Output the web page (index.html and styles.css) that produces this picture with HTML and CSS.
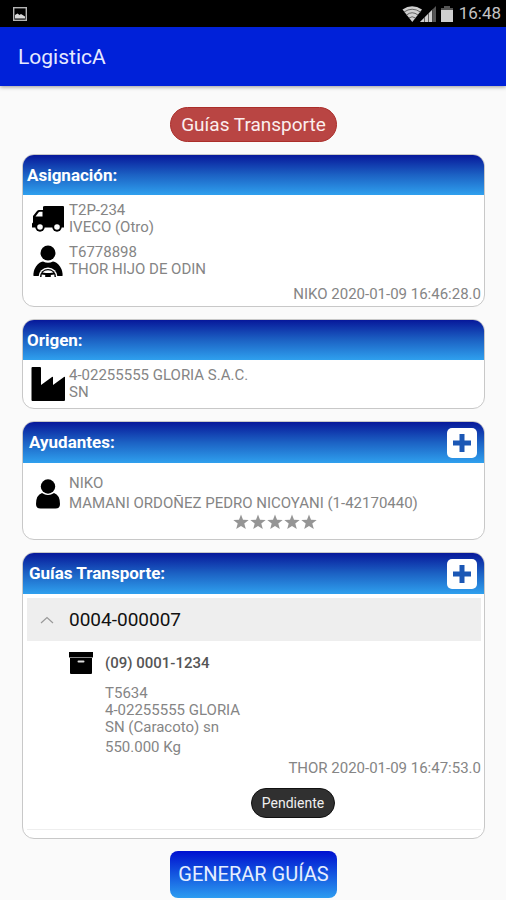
FILE: index.html
```html
<!DOCTYPE html>
<html lang="es">
<head>
  <meta charset="UTF-8">
  <meta name="viewport" content="width=device-width, initial-scale=1.0">
  <title>LogisticA</title>
  <link rel="stylesheet" href="styles.css">
</head>
<body>
  <div class="status-bar">
    <svg class="status-picture" width="14" height="14" viewBox="0 0 14 14">
      <rect x="0.7" y="0.7" width="12.6" height="12.6" fill="none" stroke="#b5b5b5" stroke-width="1.4"/>
      <path d="M2 11.5V8l2.500-1.500 2 1.500 1.500-1 4 2.500v2z" fill="#d8d8d8"/>
    </svg>
    <div class="status-right">
      <svg width="35" height="16" viewBox="0 0 35 16">
        <path d="M0.500 3.500Q10 -3 20 3.500L10.300 16z" fill="#cfcfcf"/>
        <path d="M2 6Q10 0.500 18.500 6M4.500 9Q10 4.500 16 9M7 12Q10 9.500 13.500 12" fill="none" stroke="#555" stroke-width="0.9"/>
        <path d="M18 16L34 0V16z" fill="#555"/>
        <path d="M18 16L30 4V16z" fill="#cfcfcf"/>
        <path d="M22.500 11v5M26.500 7v9M30.500 3v13" stroke="#444" stroke-width="0.8"/>
      </svg>
      <svg class="battery" width="12" height="16" viewBox="0 0 12 16">
        <path d="M3 0h6v2h3v3H0V2h3z" fill="#555"/>
        <path d="M0 4h12v12H0z" fill="#cfcfcf"/>
      </svg>
      <span class="clock">16:48</span>
    </div>
  </div>

  <header class="app-bar">
    <h1>LogisticA</h1>
  </header>

  <main class="content">
    <div class="pill">Guías Transporte</div>

    <section class="card">
      <h2 class="card-header">Asignación:</h2>
      <div class="card-body">
        <div class="row">
          <div class="row-icon">
            <svg width="32" height="26" viewBox="0 0 32 26">
              <path d="M13 0h18q1 0 1 1v20.500H0v-4l1-1v-6.500l4-5q1-1 2-1h4V1q0-1 2-1z"/>
              <path d="M3.500 10.500l3-4q.5-.7 1.300-.7H10.500V10.500z" fill="#fff"/>
              <circle cx="8" cy="21" r="4.700"/>
              <circle cx="25" cy="21" r="4.700"/>
              <circle cx="8" cy="21" r="2.800" fill="#fff"/>
              <circle cx="25" cy="21" r="2.800" fill="#fff"/>
            </svg>
          </div>
          <div class="row-text">
            <p>T2P-234</p>
            <p>IVECO (Otro)</p>
          </div>
        </div>
        <div class="row">
          <div class="row-icon">
            <svg width="30" height="32" viewBox="0 0 30 32">
              <circle cx="15" cy="8" r="7.500"/>
              <path d="M0.500 31Q0 26 3 21.500Q6 17 10 16.500Q15 19 20 16.500Q24 17 27 21.500Q30 26 29.500 31z"/>
              <path d="M5.500 32A9.500 9.500 0 0 1 24.500 32z" fill="#fff"/>
              <path d="M7 32A8 8 0 0 1 23 32z"/>
              <path d="M9.500 27.500Q11.500 25.300 15 25.300Q18.500 25.300 20.500 27.500L17 28H13zM8.700 29.500l3.500.5v2H8.500zM21.300 29.500l-3.500.5v2h3.700z" fill="#fff"/>
            </svg>
          </div>
          <div class="row-text">
            <p>T6778898</p>
            <p>THOR HIJO DE ODIN</p>
          </div>
        </div>
        <p class="stamp">NIKO 2020-01-09 16:46:28.0</p>
      </div>
    </section>

    <section class="card">
      <h2 class="card-header">Origen:</h2>
      <div class="card-body">
        <div class="row">
          <div class="row-icon">
            <svg width="34" height="34" viewBox="0 0 34 34">
              <path d="M1.500 0h7.500q1 0 1 1v17l11-8q1-.6 1 .6V18l11-8q1-.6 1 .6V33q0 1-1 1H1.500q-1 0-1-1V1q0-1 1-1z"/>
            </svg>
          </div>
          <div class="row-text">
            <p>4-02255555 GLORIA S.A.C.</p>
            <p>SN</p>
          </div>
        </div>
      </div>
    </section>

    <section class="card">
      <div class="card-header with-action">
        <h2>Ayudantes:</h2>
        <button class="add" type="button" aria-label="Agregar ayudante">
          <svg width="20" height="20" viewBox="0 0 20 20"><path d="M7.500 1h5v6.500H19v5h-6.500V19h-5v-6.500H1v-5h6.500z"/></svg>
        </button>
      </div>
      <div class="card-body helpers">
        <div class="row">
          <div class="row-icon">
            <svg width="24" height="30" viewBox="0 0 24 30">
              <path d="M6 14Q0 16 0 25q0 4.500 4.500 4.500h15Q24 29.500 24 25q0-9-6-11-6 4-12 0z"/>
              <circle cx="12" cy="7.500" r="8" fill="#fff"/>
              <circle cx="12" cy="7.500" r="7.200"/>
            </svg>
          </div>
          <div class="row-text spaced">
            <p>NIKO</p>
            <p>MAMANI ORDOÑEZ PEDRO NICOYANI (1-42170440)</p>
          </div>
        </div>
        <div class="stars" role="img" aria-label="0 de 5 estrellas">
          <svg viewBox="0 0 16 16"><path d="M8 .5l2 5.200 5.700.3-4.400 3.500 1.500 5.500L8 12l-4.800 3 1.500-5.500L.3 6 6 5.700z"/></svg>
          <svg viewBox="0 0 16 16"><path d="M8 .5l2 5.200 5.700.3-4.400 3.500 1.500 5.500L8 12l-4.800 3 1.500-5.500L.3 6 6 5.700z"/></svg>
          <svg viewBox="0 0 16 16"><path d="M8 .5l2 5.200 5.700.3-4.400 3.500 1.500 5.500L8 12l-4.800 3 1.500-5.500L.3 6 6 5.700z"/></svg>
          <svg viewBox="0 0 16 16"><path d="M8 .5l2 5.200 5.700.3-4.400 3.500 1.500 5.500L8 12l-4.800 3 1.500-5.500L.3 6 6 5.700z"/></svg>
          <svg viewBox="0 0 16 16"><path d="M8 .5l2 5.200 5.700.3-4.400 3.500 1.500 5.500L8 12l-4.800 3 1.500-5.500L.3 6 6 5.700z"/></svg>
        </div>
      </div>
    </section>

    <section class="card">
      <div class="card-header with-action">
        <h2>Guías Transporte:</h2>
        <button class="add" type="button" aria-label="Agregar guía">
          <svg width="20" height="20" viewBox="0 0 20 20"><path d="M7.500 1h5v6.500H19v5h-6.500V19h-5v-6.500H1v-5h6.500z"/></svg>
        </button>
      </div>
      <div class="guides">
        <button class="group" type="button" aria-expanded="true">
          <span class="row-icon">
            <svg width="14" height="8" viewBox="0 0 14 8"><path d="M1 7l6-5.500L13 7" fill="none" stroke="#9a9a9a" stroke-width="1.200"/></svg>
          </span>
          0004-000007
        </button>
        <div class="guide">
          <div class="guide-title">
            <svg width="24" height="22" viewBox="0 0 24 22">
              <path d="M0 0h24v5H0z"/>
              <path d="M1 6h22v15q0 1-1 1H2q-1 0-1-1z"/>
              <path d="M0 5h24v1H0z" fill="#888"/>
              <rect x="8.500" y="8.500" width="7" height="2" rx="1" fill="#ddd"/>
            </svg>
            <h3>(09) 0001-1234</h3>
          </div>
          <div class="guide-info">
            <p>T5634</p>
            <p>4-02255555 GLORIA</p>
            <p>SN (Caracoto) sn</p>
            <p class="weight">550.000 Kg</p>
          </div>
          <p class="stamp">THOR 2020-01-09 16:47:53.0</p>
          <div class="guide-state">
            <span class="state">Pendiente</span>
          </div>
        </div>
      </div>
    </section>

    <button class="generate" type="button">GENERAR GUÍAS</button>
  </main>
</body>
</html>
```
FILE: styles.css
```css
* {
  box-sizing: border-box;
}

body {
  margin: 0;
  font-family: Roboto, "Liberation Sans", sans-serif;
  font-size: 15px;
  line-height: 17px;
  color: #858585;
  background: #fafafa;
}

h1, h2, h3, p {
  margin: 0;
}

svg {
  display: block;
}

button {
  border: 0;
  padding: 0;
  font-family: inherit;
  cursor: pointer;
}

/* Android status bar */
.status-bar {
  display: flex;
  justify-content: space-between;
  align-items: center;
  height: 27px;
  padding: 0 5px 0 13px;
  background: #000;
}

.status-right {
  display: flex;
  align-items: center;
}

.battery {
  margin: 0 6px 0 4px;
}

.clock {
  font-size: 17px;
  color: #c4c4c4;
}

.app-bar {
  display: flex;
  align-items: center;
  height: 59px;
  padding: 0 18px;
  background: #0021d9;
  box-shadow: 0 1px 4px rgba(0, 0, 0, 0.4);
}

.app-bar h1 {
  font-size: 21px;
  line-height: 24px;
  font-weight: 400;
  color: #e6e9ff;
}

.content {
  display: flex;
  flex-direction: column;
  align-items: center;
  gap: 12px;
  padding: 21px 21px 2px 22px;
}

.pill {
  padding: 0 10px;
  border: 1px solid #ab2e2a;
  border-radius: 18px;
  font-size: 19px;
  line-height: 33px;
  color: #fbeeee;
  background: #b94543;
}

/* Cards */
.card {
  width: 100%;
  border: 1px solid #c8c8c8;
  border-radius: 12px;
  background: #fff;
  overflow: hidden;
}

.card-header {
  padding: 0 4px;
  font-size: 17px;
  line-height: 40px;
  font-weight: 700;
  color: #fff;
  background: linear-gradient(#07189a, #1c62c4 50%, #2fa0ee);
}

.with-action {
  display: flex;
  justify-content: space-between;
  align-items: center;
  padding: 0 7px 0 6px;
}

.with-action h2 {
  font-size: 17px;
  line-height: 41px;
}

.add {
  display: flex;
  justify-content: center;
  align-items: center;
  width: 30px;
  height: 30px;
  border-radius: 5px;
  background: #fff;
}

.add svg {
  fill: #1b57b5;
}

.card-body {
  display: flex;
  flex-direction: column;
  gap: 8px;
  padding: 7px 3px 7px 4px;
}

.card-body:has(.stamp) {
  padding-bottom: 3px;
}

.row {
  display: flex;
  align-items: center;
}

.row-icon {
  display: flex;
  flex: 0 0 42px;
  justify-content: center;
}

.stamp {
  text-align: right;
}

.helpers {
  gap: 2px;
  padding: 12px 4px 9px;
}

.spaced {
  display: grid;
  gap: 3px;
}

.stars {
  display: flex;
  justify-content: center;
  gap: 1px;
  padding-left: 42px;
}

.stars svg {
  width: 16px;
  height: 16px;
  fill: #959595;
}

/* Expandable list of guides */
.guides {
  padding: 4px 3px 8px 4px;
}

.group {
  display: flex;
  align-items: center;
  width: 100%;
  height: 43px;
  font-size: 19px;
  color: #111;
  background: #eee;
}

.group .row-icon {
  flex-basis: 40px;
  margin-right: 2px;
}

.guide {
  padding-top: 11px;
  border-bottom: 1px solid #eee;
}

.guide-title {
  display: flex;
  align-items: center;
  gap: 12px;
  padding-left: 42px;
}

.guide-title h3 {
  font-size: 15px;
  font-weight: 500;
  color: #555;
}

.guide-info {
  padding: 11px 0 4px 78px;
}

.weight {
  margin-top: 3px;
}

.guide-state {
  display: flex;
  justify-content: center;
  padding: 11px 0 11px 78px;
}

.state {
  padding: 0 10px;
  border: 1px solid #111;
  border-radius: 15px;
  font-size: 14px;
  line-height: 28px;
  color: #f0f0f0;
  background: #303030;
}

.generate {
  padding: 0 8px;
  border-radius: 8px;
  font-size: 20px;
  line-height: 47px;
  color: #e6eeff;
  background: linear-gradient(#0010d0, #1457e0 50%, #2c9cf0);
}
```
